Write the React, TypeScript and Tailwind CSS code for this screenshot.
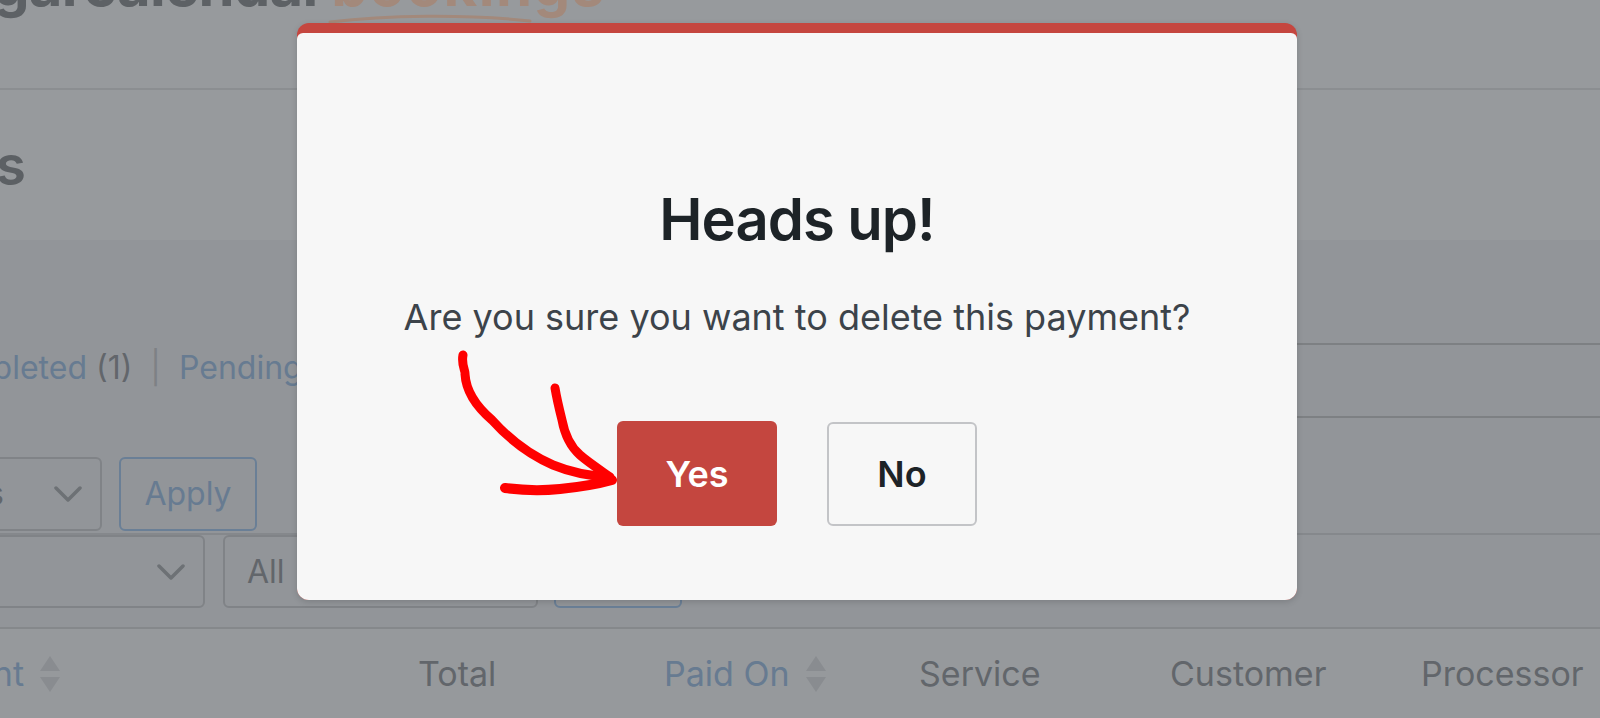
import React from "react";

function Chevron({ className = "" }: { className?: string }) {
  return (
    <svg width="28" height="16" viewBox="0 0 28 16" className={`shrink-0 ${className}`} fill="none">
      <polyline points="2,2 14,14 26,2" stroke="#6d7175" strokeWidth="3.5" strokeLinecap="round" strokeLinejoin="round" />
    </svg>
  );
}

function SortArrows() {
  return (
    <div className="flex shrink-0 flex-col gap-[6px]">
      <svg width="20" height="15" viewBox="0 0 20 15">
        <polygon points="10,0 20,15 0,15" fill="#898c90" />
      </svg>
      <svg width="20" height="15" viewBox="0 0 20 15">
        <polygon points="0,0 20,0 10,15" fill="#898c90" />
      </svg>
    </div>
  );
}

function Backdrop() {
  return (
    <div className="flex flex-col">
      {/* brand bar, cut at the top */}
      <header className="relative h-[90px] border-b-2 border-[#8b8e91] bg-[#979a9d]">
        <div className="-ml-[74px] -mt-[44px] flex whitespace-nowrap text-[58px] font-bold leading-none tracking-[-0.8px]">
          <span className="text-[#5d6165]">sugarcalendar</span>
          <span className="ml-[6px] tracking-[1.5px] text-[#a3897b]">bookings</span>
        </div>
        <svg className="absolute left-[326px] top-[13px]" width="210" height="14" viewBox="0 0 210 14" fill="none">
          <path d="M4 9 C 60 2, 140 1, 204 8" stroke="#a3897b" strokeWidth="3" strokeLinecap="round" />
        </svg>
      </header>

      <section className="h-[150px] bg-[#979a9d] pt-[48px]">
        <div className="flex w-[26px] justify-end">
          <h1 className="whitespace-nowrap text-[55px] font-semibold leading-none text-[#5c6064]">Payments</h1>
        </div>
      </section>

      <main className="bg-[#929599] pt-[103px]">
        <div className="flex h-[75px] items-start justify-between">
          <div className="-ml-[78px] mt-[9px] flex items-center gap-[18px] whitespace-nowrap text-[32px] leading-none">
            <span className="text-[#677b91]">Completed <span className="text-[#62666b]">(1)</span></span>
            <span className="text-[#7e8185]">|</span>
            <span className="text-[#677b91]">Pending <span className="text-[#62666b]">(0)</span></span>
          </div>
          <div className="h-[75px] w-[600px] border-y-2 border-[#7d8083]" />
        </div>

        <div className="mt-[39px] flex items-start gap-[17px]">
          <div className="-ml-[148px] flex h-[74px] w-[250px] items-center justify-end gap-[50px] rounded-[6px] border-2 border-[#808387] pr-[18px]">
            <span className="whitespace-nowrap text-[32px] text-[#62666b]">Bulk actions</span>
            <Chevron />
          </div>
          <div className="flex h-[74px] w-[138px] items-center justify-center rounded-[6px] border-2 border-[#6a7f96] text-[32px] text-[#677b91]">
            Apply
          </div>
        </div>

        <div className="mt-[2px] flex items-start border-t-2 border-[#85888c]">
          <div className="-ml-[100px] flex h-[73px] w-[305px] items-center justify-end rounded-[6px] border-2 border-[#808387] pr-[18px]">
            <Chevron />
          </div>
          <div className="ml-[18px] flex h-[73px] w-[315px] items-center rounded-[6px] border-2 border-[#808387] pl-[22px] text-[32px] text-[#62666b]">
            All
          </div>
          <div className="ml-[16px] h-[73px] w-[128px] rounded-[6px] border-2 border-[#6a7f96]" />
        </div>

        <div className="mt-[19px] grid h-[94px] grid-cols-[418px_246px_255px_251px_251px_1fr] items-center border-y-2 border-[#85888b] bg-[#96999c] text-[34px] leading-none text-[#62666b]">
          <div className="flex w-[60px] items-center justify-end gap-[16px]">
            <span className="whitespace-nowrap text-[#677b91]">Payment</span>
            <SortArrows />
          </div>
          <div>Total</div>
          <div className="flex items-center gap-[16px]">
            <span className="text-[#677b91]">Paid On</span>
            <SortArrows />
          </div>
          <div>Service</div>
          <div>Customer</div>
          <div>Processor</div>
        </div>
      </main>
    </div>
  );
}

function ConfirmDialog() {
  return (
    <div className="absolute left-[297px] top-[23px] h-[577px] w-[1000px] overflow-hidden rounded-[12px] bg-[#c5463f] pt-[10px] shadow-[0_2px_6px_rgba(0,0,0,0.15)]">
      <div className="flex h-full flex-col items-center rounded-t-[6px] bg-[#f7f7f7] pt-[157px]">
        <h2 className="text-[58px] font-semibold leading-none tracking-[-1px] text-[#1d2327]">Heads up!</h2>
        <p className="mt-[51px] text-[36px] leading-none text-[#3c434a]">
          Are you sure you want to delete this payment?
        </p>
        <div className="mt-[86px] flex items-center gap-[50px]">
          <button className="flex h-[105px] w-[160px] items-center justify-center rounded-[6px] bg-[#c4463f] text-[36px] font-semibold text-white">
            Yes
          </button>
          <button className="flex h-[104px] w-[150px] items-center justify-center rounded-[6px] border-2 border-[#c3c4c7] bg-[#f7f7f7] text-[36px] font-semibold text-[#1d2327]">
            No
          </button>
        </div>
      </div>
    </div>
  );
}

// hand-drawn annotation pointing at the Yes button
function Arrow() {
  return (
    <svg className="pointer-events-none absolute inset-0" width="1600" height="718" viewBox="0 0 1600 718" fill="none">
      <g stroke="#ff0000" strokeWidth="9" strokeLinecap="round" strokeLinejoin="round">
        <path d="M463 355 C 461 365, 466 372, 465 374 C 466 392, 478 408, 492 420 C 510 440, 530 455, 553 465 C 570 472, 590 476, 609 477" />
        <path d="M555 388 C 557 400, 560 412, 562 420 C 565 436, 572 448, 580 455 C 588 462, 600 470, 610 477" />
        <path d="M505 488 C 520 490, 540 491, 560 489 C 580 487, 598 484, 612 480" strokeWidth="10" />
      </g>
    </svg>
  );
}

export default function App() {
  return (
    <div className="relative h-[718px] w-[1600px] overflow-hidden bg-[#929599] font-['Inter',sans-serif]">
      <Backdrop />
      <ConfirmDialog />
      <Arrow />
    </div>
  );
}
